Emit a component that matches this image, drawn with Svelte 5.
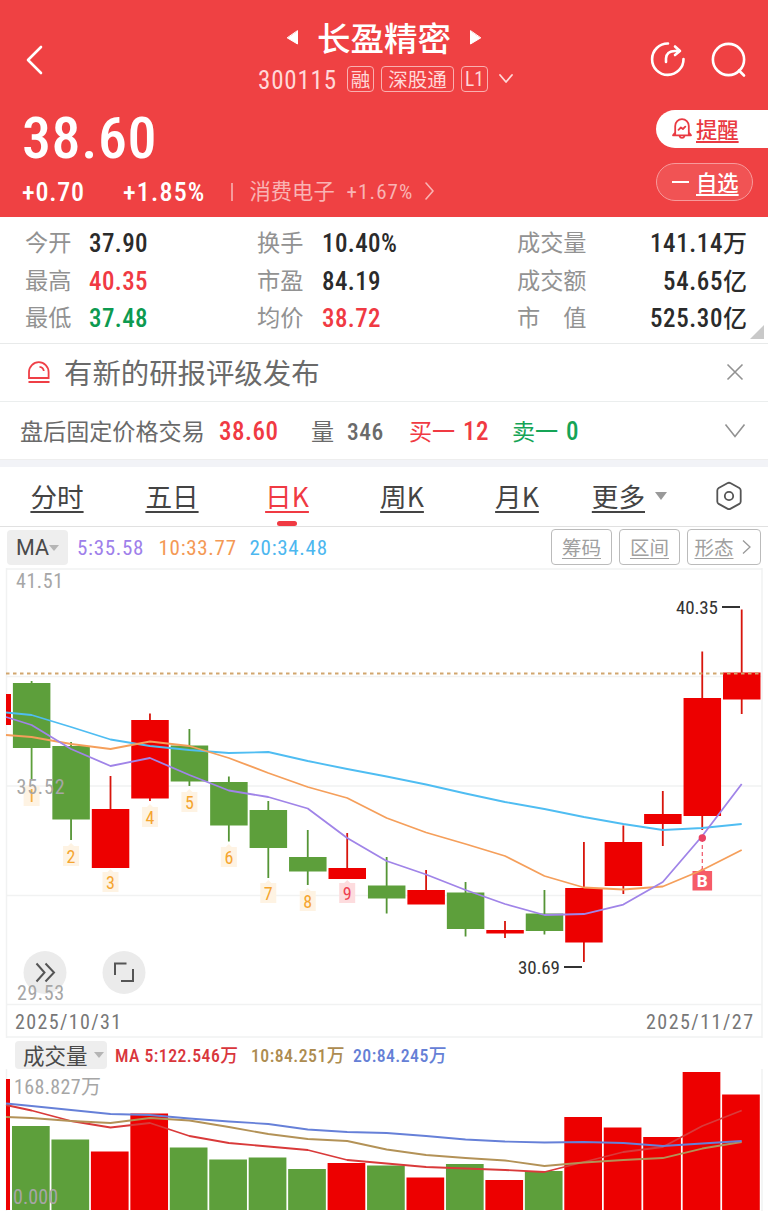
<script lang="ts">
  const stats = [
    ['今开', '37.90', '', '换手', '10.40%', '', '成交量', '141.14', '万'],
    ['最高', '40.35', 'up', '市盈', '84.19', '', '成交额', '54.65', '亿'],
    ['最低', '37.48', 'down', '均价', '38.72', 'up', '市　值', '525.30', '亿'],
  ];

  const tabs = ['分时', '五日', '日K', '周K', '月K'];
  let active = $state('日K');

  // x position of candle i
  const step = 39.45;
  const cx = (i: number) => 31.6 + i * step;

  // [up, body top, body bottom, wick top, wick bottom]
  const candles = [
    [0, 683, 748, 681, 802],
    [0, 746, 819.5, 742, 840],
    [1, 809, 868, 776, 868],
    [1, 720, 798.5, 713.5, 801],
    [0, 745.5, 781.5, 729, 786],
    [0, 782, 825.5, 776.5, 841.5],
    [0, 810, 848, 801, 878],
    [0, 857, 871.5, 830, 885],
    [1, 868, 879, 833, 879],
    [0, 885.5, 898.5, 857, 913.5],
    [1, 890, 904.5, 870, 904],
    [0, 892.5, 929, 882, 936.5],
    [1, 930, 933.5, 921, 938],
    [0, 913.5, 931, 890, 934.5],
    [1, 888, 942.5, 842, 962],
    [1, 842, 886, 825.5, 894],
    [1, 814, 824, 791, 846],
    [1, 698, 816, 651.5, 830],
    [1, 672.5, 699.5, 609.5, 714],
  ];

  const counts = [796, 856, 882, 817, 802, 857, 893, 901, 893];

  // first value of each line sits on the left edge of the chart
  const priceLines = [
    { color: '#4fbdf2', v: [712.5, 715, 727, 739.5, 746, 750, 753, 752, 761, 769, 776.5, 784.5, 793.5, 802, 809, 817, 824, 830, 828, 824] },
    { color: '#f59f5b', v: [735, 737, 744, 749, 741.5, 746, 758, 773, 787, 798, 818, 832.5, 844, 856, 876, 887.5, 889.5, 886.5, 870, 850] },
    { color: '#a084e8', v: [717, 725, 749, 766, 758, 775, 790.5, 797, 808.5, 838, 861, 874.5, 890, 904, 915, 914, 904.5, 882, 836, 784] },
  ];

  const volumes = [1126, 1139.5, 1151.5, 1113.5, 1147.5, 1159.5, 1157.5, 1169, 1163, 1165.5, 1177.5, 1164, 1180, 1171, 1117, 1127.5, 1137, 1072, 1094.5];
  const volumeLines = [
    { color: '#d93a3a', v: [1105, 1110.5, 1121, 1127.5, 1123, 1136, 1143, 1146.5, 1150, 1160, 1163.5, 1167, 1168.5, 1170, 1172, 1162, 1152, 1147, 1126, 1110.5] },
    { color: '#b39257', v: [1117, 1118, 1121, 1123, 1118, 1120.5, 1127, 1134, 1139, 1141, 1149.5, 1155, 1158, 1160.5, 1166, 1162.5, 1160, 1158, 1148.5, 1142] },
    { color: '#6680d8', v: [1103.5, 1106, 1110, 1114, 1115, 1118.5, 1121.5, 1124, 1129.5, 1132, 1133, 1136, 1139.5, 1141.5, 1142.5, 1142, 1143, 1146, 1143.5, 1141] },
  ];

  const points = (v: number[]) => v.map((y, i) => `${i === 0 ? 6 : cx(i - 1)},${y}`).join(' ');
  const fill = (up: number) => (up ? '#ed0000' : '#5d9f3b');
</script>

<div class="page">
  <header>
    <div class="nav">
      <svg class="back" width="20" height="32" viewBox="0 0 20 32"><path d="M17 3 4 16 17 29" /></svg>
      <div class="title">
        <div class="name">
          <svg width="13" height="18" viewBox="0 0 13 18"><path d="M11.5 2v13L1.5 9z" /></svg>
          <h1>长盈精密</h1>
          <svg width="13" height="18" viewBox="0 0 13 18"><path d="M1.5 2v13l10-6z" /></svg>
        </div>
        <div class="code">
          <span class="num">300115</span>
          <i class="t1">融</i><i class="t2">深股通</i><i class="t3 num">L1</i>
          <svg width="16" height="12" viewBox="0 0 16 12"><path d="M2 2l6 7 6-7" /></svg>
        </div>
      </div>
      <div class="actions">
        <svg width="38" height="38" viewBox="0 0 38 38">
          <path d="M20 3.5a15.7 15.7 0 1 0 15.5 15.5M18 22v-3.5q.5-7.5 9-7.5h5M27 6.500 32 11l-5 4" />
        </svg>
        <svg width="38" height="38" viewBox="0 0 38 38">
          <circle cx="18.5" cy="19.5" r="15.6" /><path d="M29 30.500l5 5" />
        </svg>
      </div>
    </div>
    <div class="quote">
      <div class="left">
        <div class="price num">38.60</div>
        <div class="change num">
          <b class="diff">+0.70</b><b class="pct">+1.85%</b>
          <span class="sep"></span>
          <span class="sector">消费电子</span><span class="sector-pct">+1.67%</span>
          <svg width="10" height="18" viewBox="0 0 10 18"><path d="M1 1l7 8-7 8" /></svg>
        </div>
      </div>
      <div class="right">
        <div class="pill remind">
          <svg width="20" height="22" viewBox="0 0 20 22">
            <path d="M3.2 17V8a6.8 6.8 0 0 1 13.6 0v9M3.2 14.500 1 17.300h18l-2.200-2.800M7.500 18a2.600 2.600 0 0 0 5 0M6.500 11.800l2.400-2.300 2 1.500 2.400-2.400" />
          </svg>
          <u>提醒</u>
        </div>
        <div class="pill fav"><span class="minus"></span><u>自选</u></div>
      </div>
    </div>
  </header>

  <section class="stats">
    {#each stats as s}
      <div class="row">
        <span>{s[0]}</span><b class="num {s[2]}">{s[1]}</b>
        <span>{s[3]}</span><b class="num {s[5]}">{s[4]}</b>
        <span>{s[6]}</span><b class="num end">{s[7]}<em>{s[8]}</em></b>
      </div>
    {/each}
    <div class="corner"></div>
  </section>

  <section class="notice">
    <svg width="24" height="24" viewBox="0 0 24 24">
      <path d="M2 17v-6a9.800 9.800 0 0 1 19.600 0v6zM1.500 21h21M12.500 5.800c2.400.2 4 1.800 4.300 4.200" />
    </svg>
    <p>有新的研报评级发布</p>
    <svg class="grey" width="18" height="18" viewBox="0 0 18 18"><path d="M1.5 1.5l15 15M16.5 1.5l-15 15" /></svg>
  </section>

  <section class="after">
    <span class="label">盘后固定价格交易</span>
    <b class="num up p">38.60</b>
    <span class="q">量</span><b class="num n">346</b>
    <span class="up">买一</span><b class="num up b">12</b>
    <span class="sell">卖一</span><b class="num sell">0</b>
    <svg class="grey" width="22" height="15" viewBox="0 0 22 15"><path d="M1.5 1.5l9.5 12 9.5-12" /></svg>
  </section>

  <nav class="tabs">
    {#each tabs as tab}
      <button class:active={tab === active} onclick={() => (active = tab)}>{tab}</button>
    {/each}
    <button class="more">更多<span class="caret"></span></button>
    <svg width="30" height="32" viewBox="0 0 30 32">
      <path d="M13.3 3.2q1.7-.9 3.4 0l8.6 4.7q1.4.9 1.4 2.5v11q0 1.6-1.4 2.5l-8.6 4.7q-1.7.9-3.4 0l-8.6-4.7q-1.4-.9-1.4-2.5v-11q0-1.6 1.4-2.5z" />
      <circle cx="15" cy="16" r="4.2" />
    </svg>
  </nav>

  <section class="indicators">
    <div class="select">MA<span class="caret"></span></div>
    <span class="num m5">5:35.58</span>
    <span class="num m10">10:33.77</span>
    <span class="num m20">20:34.48</span>
    <div class="tools">
      <div><u>筹码</u></div>
      <div><u>区间</u></div>
      <div class="wide"><u>形态</u><svg width="9" height="16" viewBox="0 0 9 16"><path d="M1 1.5l7 6.5-7 6.5" /></svg></div>
    </div>
  </section>

  <svg class="chart" width="768" height="470" viewBox="0 568 768 470">
    <path d="M6 569h756M6 676.5h756M6 786h756M6 895.5h756M6 1004.5h756M6 1037h756M6.5 568v470M762 568v470" stroke="#f1f2f2" stroke-width="1.5" />
    <rect x="6" y="694" width="5" height="31" fill="#ed0000" />
    {#each candles as [up, top, bottom, high, low], i}
      {#if i < counts.length}
        <g class="count" class:nine={i === 8}>
          <path d="M{cx(i) - 8} {counts[i] - 10}h5l3-3 3 3h5v20h-16z" />
          {#if i > 0}<text x={cx(i)} y={counts[i] + 6.5}>{i + 1}</text>{/if}
        </g>
      {/if}
      {#if i === 0}
        <rect x={cx(i) - 0.9} y={high} width="1.8" height={780 - high} fill={fill(up)} />
        <rect x={cx(i) - 0.9} y="789" width="1.8" height="13" fill="#f5ae42" />
      {:else}
        <rect x={cx(i) - 0.9} y={high} width="1.8" height={low - high} fill={up ? '#d8150c' : '#559536'} />
      {/if}
      <rect x={cx(i) - 18.7} y={top} width="37.5" height={bottom - top} fill={fill(up)} />
    {/each}

    <path d="M702.3 838v32" stroke="#ef5568" stroke-width="1.2" stroke-dasharray="4 3" />
    <path d="M692.5 871h6.5l3.3-3 3.3 3h6.5v19.5h-19.6z" fill="#f65b68" />
    <text class="buy" x="702.3" y="887">B</text>
    {#each priceLines as line}
      <polyline points={points(line.v)} stroke={line.color} />
    {/each}
    <circle cx="702.3" cy="838" r="3.7" fill="#e94263" />
    <path d="M6 673.5h756" stroke="#d1a66e" stroke-width="1.8" stroke-dasharray="3.5 3.5" />

    <text class="mark" x="676" y="614" textLength="42">40.35</text>
    <path d="M722 607h18M564 967h18" stroke="#333" stroke-width="2" />
    <text class="mark" x="518" y="974" textLength="42">30.69</text>

    <g class="round">
      <circle cx="45" cy="972.5" r="21.5" />
      <path d="M36.5 963.5l8 9-8 9M45.5 963.5l8.500 9-8.500 9" />
      <circle cx="124" cy="972.5" r="21.5" />
      <path d="M126.5 963.5h-11.500v11.500M133 969v12h-12" />
    </g>
    <text class="axis" x="16" y="587.5" textLength="47">41.51</text>
    <text class="axis" x="16.5" y="794" textLength="48">35.52</text>
    <text class="axis" x="17" y="1000" textLength="47">29.53</text>
    <text class="date" x="15" y="1029" textLength="106">2025/10/31</text>
    <text class="date" x="646" y="1029" textLength="107">2025/11/27</text>
  </svg>

  <div class="volume">
    <div class="legend">
      <div class="select">成交量<span class="caret"></span></div>
      <span class="num v5">MA 5:122.546万</span>
      <span class="num v10">10:84.251万</span>
      <span class="num v20">20:84.245万</span>
    </div>
    <svg class="chart" width="768" height="148" viewBox="0 1069 768 148">
      <path d="M6.5 1069v142M762 1069v142" stroke="#f1f2f2" stroke-width="1.5" />
      <rect x="6" y="1079" width="4" height="131" fill="#ed0000" />
      {#each volumes as top, i}
        <rect x={12 + i * step} y={top} width="37.7" height={1210 - top} fill={fill(candles[i][0])} />
      {/each}
      {#each volumeLines as line}
        <polyline points={points(line.v)} stroke={line.color} />
      {/each}
      <text class="axis" x="14" y="1093.5" textLength="87">168.827万</text>
      <text class="axis" x="13" y="1204" textLength="45">0.000</text>
    </svg>
  </div>
</div>

<style>
  :global(body) { margin: 0; background: #fff; }

  .page {
    width: 768px;
    height: 1217px;
    overflow: hidden;
    font-family: "Noto Sans CJK SC", sans-serif;
    color: #6a6a6a;
    font-weight: 400;
    line-height: 1;
  }

  .num, .chart text { font-family: Roboto, "Noto Sans CJK SC", sans-serif; font-stretch: 87%; }
  b { font-weight: 500; }
  i, em { font-style: normal; }
  svg { display: block; fill: none; flex: none; }
  u { text-underline-offset: 3px; text-decoration-thickness: 2px; text-decoration-skip-ink: none; }
  span, b, u, i { white-space: nowrap; }
  .up { color: #f03a43 !important; }
  .down { color: #0d9a50 !important; }
  .caret {
    border: 5px solid transparent;
    border-top: 6px solid #b5b5b5;
    border-bottom: 0;
  }

  header { height: 217px; background: #ef4143; color: #fff; }
  header svg path, header svg circle { stroke: #fff; stroke-width: 2.6; stroke-linecap: round; stroke-linejoin: round; }

  .nav { height: 104px; display: grid; grid-template-columns: 258px 1fr 122px; }
  .back { margin: 44px 0 0 24px; }
  .title { padding-top: 17px; }
  .name { display: flex; align-items: center; gap: 18px; padding-left: 28px; height: 42px; }
  .name svg path { fill: #fff; stroke-width: 1; }
  h1 { margin: -3px 0 0; font-size: 33.5px; font-weight: 500; line-height: 40px; }
  .code { display: flex; align-items: center; height: 28px; margin-top: 6px; color: #ffd8d8; }
  .code > span { font-size: 25px; width: 89px; letter-spacing: 0.8px; line-height: 30px; padding-top: 3px; }
  .code i {
    box-sizing: border-box;
    border: 1.5px solid #f9b0b0;
    border-radius: 4px;
    height: 26px;
    font-size: 19.5px;
    line-height: 23px;
    text-align: center;
    margin-right: 7px;
  }
  .code .t1 { width: 27px; }
  .code .t2 { width: 73px; }
  .code .t3 { width: 27px; font-size: 19.5px; line-height: 25px; margin-right: 10px; }
  .code svg path { stroke: #ffd8d8; stroke-width: 1.8; }
  .actions { display: flex; gap: 24px; padding: 40px 0 0 2px; }

  .quote { display: flex; justify-content: space-between; }
  .left { padding-left: 22px; }
  .price { font-size: 58px; font-weight: 500; letter-spacing: 0.6px; line-height: 69px; height: 71px; }
  .change { display: flex; align-items: center; height: 34px; }
  .diff { font-size: 26px; width: 101px; letter-spacing: 0.8px; }
  .pct { font-size: 26px; width: 108px; letter-spacing: 1.2px; }
  .sep { width: 1.5px; height: 18px; background: #f69a9a; margin-right: 17px; }
  .sector { font-size: 21.3px; width: 97px; color: #f9b3b3; margin-top: -1px; }
  .sector-pct { font-size: 21px; width: 78px; color: #f9b3b3; letter-spacing: 1.1px; }
  .change svg { margin-top: -2px; }
  .change svg path { stroke: #f9b3b3; stroke-width: 1.6; }
  .right { width: 112px; padding-top: 6px; }
  .pill { box-sizing: border-box; height: 38px; display: flex; align-items: center; border-radius: 19px; font-size: 21.3px; font-weight: 500; }
  .pill u { margin-top: -1px; }
  .remind { background: #fff; color: #e93a42; border-radius: 19px 0 0 19px; padding-left: 16px; gap: 4px; }
  .remind svg path { stroke: #e93a42; stroke-width: 1.8; }
  .fav { width: 97px; margin-top: 15px; border: 1.5px solid #f79a9b; background: #f15354; padding-left: 15px; gap: 7px; }
  .minus { width: 17px; height: 2px; background: #fff; }

  .stats { position: relative; height: 127px; box-sizing: border-box; padding: 6px 21px 0 25px; border-bottom: 1px solid #e8eaea; background: #fff; }
  .row { display: grid; grid-template-columns: 64px 168px 65px 195px 110px 1fr; align-items: center; height: 37.7px; }
  .row span { font-size: 23.2px; color: #929292; line-height: 36px; height: 39px; }
  .row b { font-size: 25px; color: #2b2b2b; letter-spacing: 0.4px; padding-top: 2px; }
  .row .end { text-align: right; letter-spacing: 0.6px; }
  em { font-size: 24px; font-weight: 500; letter-spacing: 0; }
  .corner { position: absolute; right: 4px; bottom: 4px; border-left: 14px solid transparent; border-bottom: 14px solid #c9c9c9; }

  .notice { display: flex; align-items: center; height: 58px; box-sizing: border-box; padding: 0 24px 0 27px; border-bottom: 1px solid #ebeeee; }
  .notice path { stroke: #ef3f46; stroke-width: 1.8; }
  .notice p { flex: 1; margin: 0 0 0 13px; font-size: 28.4px; line-height: 56px; height: 57px; }
  .notice .grey { margin-top: -2px; }
  .notice .grey path, .after .grey path { stroke: #929292; stroke-width: 1.6; }

  .after { display: flex; align-items: center; height: 58px; box-sizing: border-box; padding: 0 22px 0 20px; font-size: 23.1px; border-bottom: 1px solid #eee; }
  .after b { font-size: 25px; letter-spacing: 0.5px; line-height: 30px; padding-top: 3px; }
  .after .label { width: 199px; }
  .after .p { width: 92px; }
  .after .q { width: 36px; }
  .after .n { width: 62px; font-size: 23.5px; }
  .after .up:not(b) { width: 54px; }
  .after .b { width: 49px; }
  .after .sell { color: #15a456; width: 54px; }
  .after .grey { margin-left: auto; }

  .tabs { box-sizing: border-box; border-top: 7px solid #f2f3f7; display: flex; align-items: center; height: 67px; border-bottom: 1px solid #e1e1e1; }
  .tabs button {
    width: 115px;
    height: 59px;
    padding: 0 1px 0 0;
    border: 0;
    background: none;
    color: #444;
    font: 400 26.6px/54px "Noto Sans CJK SC", sans-serif;
    text-decoration: underline 2px;
    text-underline-offset: 4px;
    text-decoration-skip-ink: none;
    margin-top: -2px;
  }
  .tabs .active { position: relative; color: #f03a43; }
  .tabs .active::after {
    content: '';
    position: absolute;
    left: 47px;
    bottom: -1px;
    width: 20px;
    height: 5px;
    border-radius: 3px;
    background: #f03a43;
  }
  .tabs .more { width: 93px; display: flex; align-items: center; justify-content: flex-end; gap: 10px; }
  .more .caret { border-width: 8px 6.5px 0; border-top-color: #999; }
  .tabs svg { margin: -2px 0 0 46px; }
  .tabs path, .tabs circle { stroke: #555; stroke-width: 1.8; }

  .indicators { display: flex; align-items: center; height: 41px; padding-left: 7px; font-size: 21px; }
  .select { display: flex; align-items: center; background: #eee; border-radius: 4px; color: #4a4a4a; }
  .indicators .select { box-sizing: border-box; width: 61px; height: 35px; padding-left: 9px; margin-right: 9px; font-family: Roboto, sans-serif; font-size: 21.5px; gap: 0; }
  .indicators .num { letter-spacing: 0.7px; line-height: 30px; }
  .m5 { color: #9e80ea; width: 81.5px; }
  .m10 { color: #f49955; width: 91px; }
  .m20 { color: #4cb7ef; }
  .tools { display: flex; gap: 7px; margin-left: auto; padding: 0 7px 1px 0; }
  .tools div { box-sizing: border-box; width: 61px; height: 36px; border: 1.5px solid #bbb; border-radius: 4px; display: flex; align-items: center; justify-content: center; color: #a0a0a0; font-size: 19.5px; }
  .tools u { text-decoration-thickness: 1px; margin-top: -1px; }
  .tools .wide { width: 74px; gap: 8px; padding-right: 3px; }
  .tools path { stroke: #999; stroke-width: 1.3; }

  .chart polyline { stroke-width: 1.8; stroke-linejoin: round; }
  .chart .axis { font-size: 20px; fill: #a6a6a6; }
  .chart .date { font-size: 20px; fill: #777; }
  .chart .mark { font-size: 19px; fill: #333; }
  .chart .count text { font-size: 18px; fill: #f5a52f; text-anchor: middle; }
  .count path { fill: #fef3e3; }
  .nine path { fill: #fddcde; }
  .chart .nine text { fill: #ee4151; }
  .chart .buy { font-size: 17px; font-weight: 800; font-stretch: 100%; fill: #fff; text-anchor: middle; }
  .round circle { fill: #ebebeb; }
  .round path { stroke: #555; stroke-width: 2; fill: none; }

  .volume { height: 179px; }
  .legend { display: flex; align-items: center; box-sizing: border-box; height: 33px; padding: 4px 0 0 15px; margin-top: -2px; font-size: 17.8px; }
  .legend .select { box-sizing: border-box; width: 92px; height: 28px; padding-left: 8px; margin-right: 8px; font-size: 21.5px; gap: 6px; line-height: 24px; }
  .legend .select .caret { margin-right: -2px; }
  .legend .num { font-weight: 500; letter-spacing: 0.45px; line-height: 26px; padding-top: 2px; }
  .v5 { color: #d9363c; width: 136px; }
  .v10 { color: #ad8c50; width: 102px; }
  .v20 { color: #6580d6; }
</style>
